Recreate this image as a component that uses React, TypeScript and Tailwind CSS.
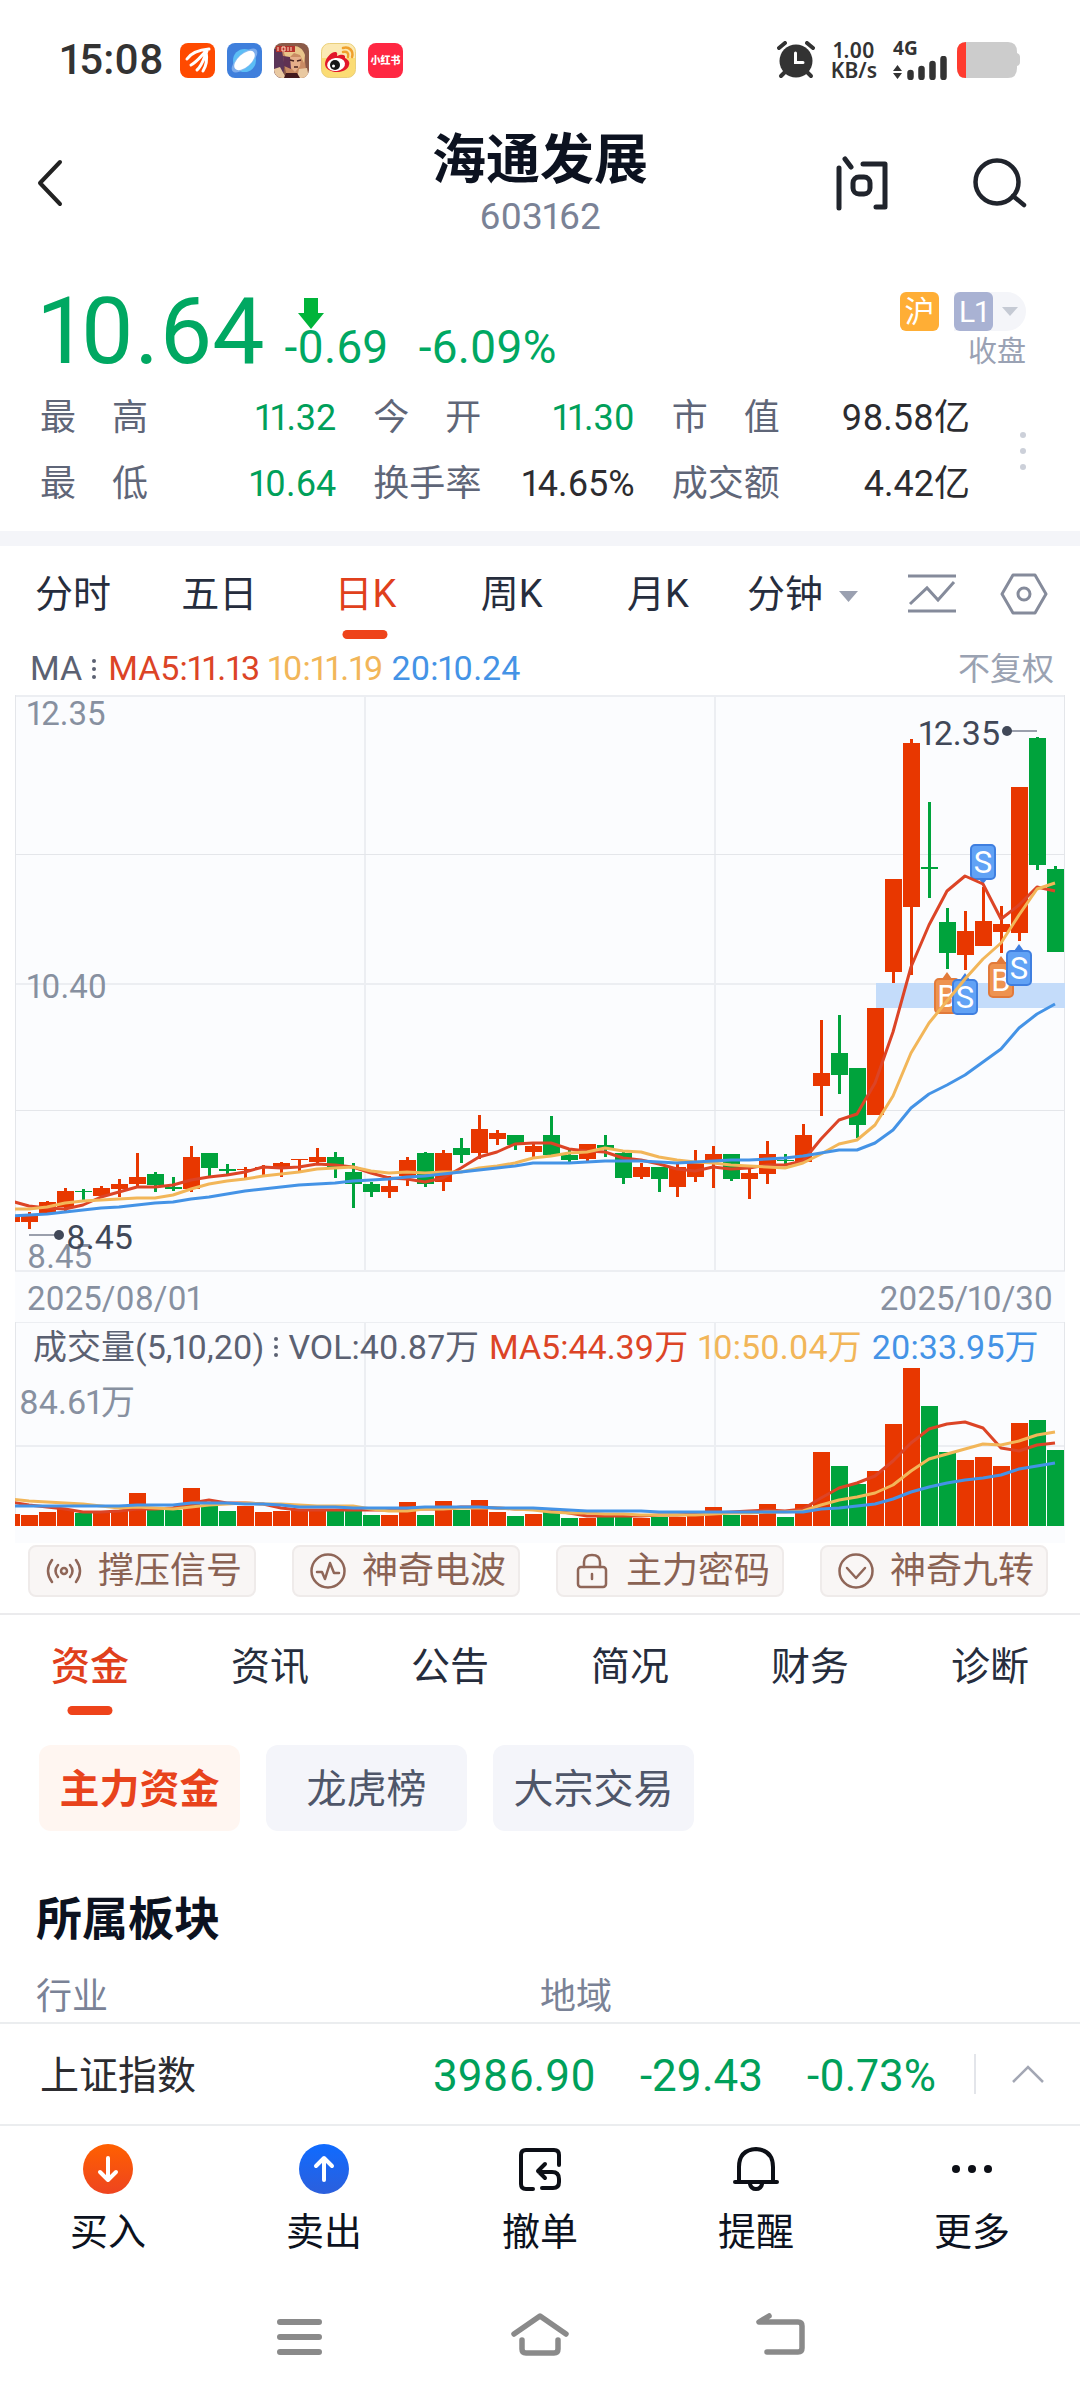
import { useState } from "react";

// [rising, body top, body bottom, high, low, volume height]
type Candle = [number, number, number, number, number, number];

const STEP = 18;
const FIRST_X = 11;

const candles: Candle[] = [
  [1, 1217, 1222, 1217, 1222, 12],
  [1, 1214, 1222, 1212, 1229, 11],
  [1, 1202, 1213, 1201, 1213, 14],
  [1, 1191, 1207, 1188, 1211, 17],
  [0, 1191, 1192, 1189, 1200, 13],
  [1, 1188, 1196, 1186, 1197, 14],
  [1, 1184, 1189, 1179, 1197, 16],
  [1, 1177, 1184, 1153, 1186, 33],
  [0, 1174, 1185, 1172, 1192, 17],
  [0, 1187, 1189, 1177, 1191, 16],
  [1, 1157, 1189, 1146, 1192, 38],
  [0, 1153, 1168, 1153, 1177, 21],
  [0, 1169, 1171, 1164, 1174, 15],
  [1, 1169, 1170, 1167, 1178, 20],
  [1, 1167, 1168, 1165, 1176, 14],
  [1, 1163, 1168, 1162, 1177, 15],
  [1, 1159, 1160, 1159, 1171, 17],
  [1, 1157, 1162, 1148, 1164, 16],
  [0, 1157, 1167, 1152, 1178, 17],
  [0, 1172, 1184, 1163, 1208, 16],
  [0, 1184, 1192, 1182, 1197, 11],
  [1, 1186, 1192, 1176, 1198, 11],
  [1, 1160, 1176, 1157, 1186, 24],
  [0, 1153, 1184, 1152, 1187, 11],
  [1, 1153, 1182, 1150, 1191, 25],
  [0, 1148, 1155, 1138, 1163, 16],
  [1, 1129, 1153, 1115, 1159, 26],
  [1, 1133, 1139, 1130, 1145, 14],
  [0, 1135, 1145, 1135, 1150, 10],
  [1, 1146, 1152, 1143, 1158, 12],
  [0, 1135, 1155, 1116, 1155, 14],
  [0, 1155, 1160, 1150, 1162, 8],
  [1, 1144, 1159, 1144, 1161, 8],
  [0, 1145, 1148, 1135, 1157, 9],
  [0, 1153, 1178, 1152, 1184, 9],
  [1, 1167, 1177, 1163, 1179, 8],
  [0, 1167, 1179, 1167, 1192, 9],
  [1, 1167, 1187, 1162, 1197, 9],
  [1, 1163, 1177, 1150, 1182, 10],
  [1, 1154, 1160, 1146, 1188, 19],
  [0, 1154, 1179, 1154, 1181, 11],
  [1, 1173, 1179, 1168, 1199, 11],
  [1, 1154, 1174, 1141, 1184, 22],
  [0, 1160, 1161, 1154, 1164, 9],
  [1, 1135, 1162, 1124, 1163, 22],
  [1, 1073, 1086, 1020, 1116, 74],
  [0, 1053, 1075, 1015, 1094, 60],
  [0, 1068, 1125, 1068, 1138, 42],
  [1, 1008, 1115, 1008, 1115, 55],
  [1, 879, 972, 879, 983, 102],
  [1, 743, 907, 739, 975, 158],
  [0, 867, 869, 802, 898, 120],
  [0, 922, 953, 908, 969, 74],
  [1, 931, 955, 911, 970, 66],
  [1, 921, 946, 887, 946, 69],
  [1, 924, 932, 906, 953, 60],
  [1, 787, 933, 787, 941, 103],
  [0, 738, 865, 737, 870, 106],
  [0, 869, 952, 866, 952, 76],
];

const priceMa = {
  ma5: [
    1201, 1206, 1208, 1209, 1205, 1197, 1192, 1187, 1187, 1185, 1180, 1177, 1175, 1172, 1167, 1168, 1167, 1164, 1165,
    1167, 1173, 1178, 1179, 1182, 1178, 1168, 1157, 1152, 1144, 1143, 1143, 1149, 1151, 1152, 1158, 1160, 1164, 1169,
    1171, 1167, 1169, 1168, 1165, 1165, 1161, 1139, 1120, 1114, 1083, 1032, 967, 925, 891, 876, 884, 919, 905, 887, 891,
  ],
  ma10: [
    1209, 1209, 1207, 1203, 1201, 1200, 1199, 1198, 1198, 1195, 1189, 1184, 1181, 1179, 1176, 1174, 1172, 1169, 1168,
    1167, 1171, 1173, 1172, 1173, 1172, 1172, 1168, 1166, 1163, 1158, 1156, 1153, 1152, 1148, 1151, 1152, 1157, 1160,
    1162, 1163, 1165, 1166, 1167, 1168, 1163, 1154, 1144, 1140, 1125, 1096, 1053, 1023, 1001, 979, 959, 943, 915, 889,
    883,
  ],
  ma20: [
    1216, 1215, 1214, 1212, 1210, 1208, 1207, 1205, 1203, 1202, 1199, 1197, 1194, 1191, 1189, 1187, 1185, 1184, 1183,
    1181, 1180, 1179, 1177, 1176, 1174, 1172, 1170, 1168, 1166, 1163, 1163, 1163, 1162, 1161, 1161, 1161, 1162, 1163,
    1162, 1161, 1160, 1160, 1159, 1158, 1156, 1153, 1150, 1150, 1143, 1130, 1108, 1094, 1085, 1075, 1062, 1049, 1028,
    1014, 1004,
  ],
};

const volumeMa = {
  ma5: [
    1502, 1505, 1507, 1509, 1512, 1512, 1511, 1509, 1509, 1508, 1503, 1500, 1503, 1503, 1504, 1508, 1510, 1510, 1510,
    1510, 1510, 1510, 1509, 1509, 1509, 1507, 1507, 1508, 1509, 1509, 1510, 1513, 1516, 1516, 1516, 1516, 1515, 1515,
    1514, 1513, 1512, 1511, 1510, 1511, 1509, 1498, 1488, 1483, 1476, 1461, 1443, 1429, 1424, 1422, 1428, 1448, 1451,
    1445, 1443,
  ],
  ma10: [
    1499, 1501, 1502, 1503, 1504, 1506, 1508, 1507, 1508, 1509, 1507, 1505, 1504, 1503, 1504, 1504, 1505, 1506, 1506,
    1506, 1509, 1511, 1511, 1509, 1509, 1508, 1508, 1508, 1509, 1510, 1512, 1513, 1513, 1514, 1514, 1515, 1515, 1515,
    1515, 1514, 1513, 1513, 1512, 1512, 1511, 1505, 1500, 1497, 1493, 1485, 1471, 1459, 1454, 1449, 1444, 1445, 1441,
    1435, 1432,
  ],
  ma20: [
    1506, 1506, 1506, 1506, 1506, 1506, 1506, 1505, 1505, 1505, 1503, 1503, 1503, 1504, 1504, 1505, 1507, 1507, 1507,
    1508, 1508, 1508, 1508, 1507, 1507, 1507, 1507, 1508, 1508, 1508, 1509, 1510, 1511, 1511, 1511, 1511, 1512, 1512,
    1512, 1512, 1512, 1512, 1512, 1512, 1512, 1509, 1508, 1506, 1504, 1499, 1492, 1487, 1483, 1480, 1478, 1475, 1469,
    1466, 1463,
  ],
};

const markers = [
  { kind: "S", x: 983, y: 844, tip: "down" },
  { kind: "B", x: 947, y: 978, tip: "up" },
  { kind: "S", x: 965, y: 979, tip: "up" },
  { kind: "B", x: 1001, y: 962, tip: "up" },
  { kind: "S", x: 1019, y: 950, tip: "up" },
];

const stats = [
  { label: ["最", "高"], value: "11.32", green: true },
  { label: ["今", "开"], value: "11.30", green: true },
  { label: ["市", "值"], value: "98.58亿", green: false },
  { label: ["最", "低"], value: "10.64", green: true },
  { label: ["换", "手", "率"], value: "14.65%", green: false },
  { label: ["成", "交", "额"], value: "4.42亿", green: false },
];

const periods = ["分时", "五日", "日K", "周K", "月K"];
const sections = ["资金", "资讯", "公告", "简况", "财务", "诊断"];
const fundTabs = ["主力资金", "龙虎榜", "大宗交易"];

const xAt = (i: number) => FIRST_X + i * STEP;
const colorOf = (up: number) => (up ? "#e83700" : "#00a33c");
const toPoints = (ys: number[]) => ys.map((y, i) => `${xAt(i)},${y}`).join(" ");

function MaLines({ data, clip }: { data: typeof priceMa; clip: string }) {
  return (
    <g fill="none" strokeWidth="3" strokeLinejoin="round" clipPath={`url(#${clip})`}>
      <polyline points={toPoints(data.ma5)} stroke="#dc4426" />
      <polyline points={toPoints(data.ma10)} stroke="#f2b659" />
      <polyline points={toPoints(data.ma20)} stroke="#4493e6" />
    </g>
  );
}

function Marker({ kind, x, y, tip }: { kind: string; x: number; y: number; tip: string }) {
  const buy = kind === "B";
  const fill = buy ? "#ee9350" : "#61a2f5";
  const stroke = buy ? "#e27a3a" : "#3f7fe0";
  const nose = tip === "up" ? `M${x - 5} ${y + 1}L${x} ${y - 6}L${x + 5} ${y + 1}Z` : `M${x - 5} ${y + 34}L${x} ${y + 40}L${x + 5} ${y + 34}Z`;
  return (
    <g>
      <path d={nose} fill={stroke} />
      <rect x={x - 12} y={y + 1} width="24" height="34" rx="4" fill={fill} stroke={stroke} strokeWidth="2" />
      <text x={x} y={y + 29} textAnchor="middle" fontSize="31" fill="#fff">
        {kind}
      </text>
    </g>
  );
}

function PriceChart() {
  return (
    <svg viewBox="15 695 1050 577" className="block h-auto w-full overflow-visible" role="img" aria-label="日K">
      <defs>
        <clipPath id="price">
          <rect x="15" y="695" width="1050" height="577" />
        </clipPath>
      </defs>
      <rect x="15" y="695" width="1050" height="577" fill="#fbfcfe" />
      <g stroke="#eceef2" strokeWidth="2">
        <path d="M15 696H1065M15 984H1065M15 1271H1065M365 695V1271M715 695V1271" />
        <path d="M15 854.5H1065M15 1110.5H1065M15.5 695V1271M1064.5 695V1271" strokeWidth="1" stroke="#e4e6ea" />
      </g>
      <rect x="876" y="983" width="189" height="25" fill="#c4dcfa" />
      <text x="27" y="725" fontSize="33" fill="#8790a0">12.35</text>
      <text x="27" y="998" fontSize="33" fill="#8790a0">10.40</text>
      <text x="27" y="1268" fontSize="33" fill="#8790a0">8.45</text>
      <g clipPath="url(#price)">
        {candles.map(([up, top, bottom, high, low], i) => (
          <g key={i} fill={colorOf(up)}>
            <rect x={xAt(i) - 8} y={top} width="17" height={bottom - top} />
            <rect x={xAt(i) - 1} y={high} width="3" height={low - high} />
          </g>
        ))}
      </g>
      {markers.map((marker) => (
        <Marker key={marker.x} {...marker} />
      ))}
      <MaLines data={priceMa} clip="price" />
      <path d="M1007 731H1037M29 1235H59" stroke="#9a9fac" strokeWidth="2" />
      <circle cx="1007" cy="731" r="5" fill="#414858" />
      <circle cx="59" cy="1235" r="5" fill="#414858" />
      <text x="1000" y="745" fontSize="34" fill="#414858" textAnchor="end">12.35</text>
      <text x="66" y="1249" fontSize="34" fill="#414858">8.45</text>
    </svg>
  );
}

function VolumeChart() {
  return (
    <svg viewBox="15 1322 1050 221" className="block h-auto w-full" role="img" aria-label="成交量">
      <defs>
        <clipPath id="volume">
          <rect x="15" y="1322" width="1050" height="221" />
        </clipPath>
      </defs>
      <rect x="15" y="1322" width="1050" height="221" fill="#fbfcfe" />
      <path d="M15 1322H1065M15 1446H1065M365 1322V1526M715 1322V1526" stroke="#eceef2" strokeWidth="2" />
      <path d="M15.5 1322V1526M1064.5 1322V1526" stroke="#e4e6ea" />
      {candles.map(([up, , , , , vol], i) => (
        <rect key={i} x={xAt(i) - 8} y={1526 - vol} width="17" height={vol} fill={colorOf(up)} />
      ))}
      <MaLines data={volumeMa} clip="volume" />
    </svg>
  );
}

function Dots({ className }: { className?: string }) {
  return (
    <span className={`flex flex-col gap-1 ${className ?? ""}`}>
      <i className="h-1 w-1 rounded-full bg-[#5b6172]" />
      <i className="h-1 w-1 rounded-full bg-[#5b6172]" />
      <i className="h-1 w-1 rounded-full bg-[#5b6172]" />
    </span>
  );
}

function StatusBar() {
  return (
    <div className="flex h-[120px] items-center justify-between pr-[60px] pl-[60px] text-[#333]">
      <div className="flex items-center gap-3">
        <span className="mr-1 text-[42px] leading-none font-medium">15:08</span>
        <svg viewBox="0 0 35 35" className="size-[35px]">
          <rect width="35" height="35" rx="8" fill="#ff4a00" />
          <path
            d="M7 16C11 10 17 7 29 6M11 22C17 19 21 13 27 7M17 27C22 23 24 15 27 8M23 28C27 22 27 14 26 8"
            fill="none"
            stroke="#fff"
            strokeWidth="3"
            strokeLinecap="round"
          />
        </svg>
        <svg viewBox="0 0 35 35" className="size-[35px]">
          <rect width="35" height="35" rx="8" fill="#3f7fdc" />
          <circle cx="17.5" cy="17.5" r="11.5" fill="#5cbef5" />
          <ellipse cx="17.5" cy="17.5" rx="16" ry="7" transform="rotate(-42 17.5 17.5)" fill="#8fb9f0" opacity=".8" />
          <ellipse cx="17.5" cy="17.5" rx="12.5" ry="6.5" transform="rotate(-42 17.5 17.5)" fill="#fff" />
        </svg>
        <svg viewBox="0 0 35 35" className="size-[35px]">
          <defs>
            <clipPath id="game">
              <rect width="35" height="35" rx="8" />
            </clipPath>
          </defs>
          <g clipPath="url(#game)">
            <rect width="35" height="35" fill="#8a5a48" />
            <path d="M0 6H12L9 35H0Z" fill="#5b3558" />
            <path d="M8 8L20 3L30 10L33 35H26L12 30Z" fill="#c98b63" />
            <path d="M10 10C14 1 27 0 31 12L30 20L26 12L20 10L13 17Z" fill="#e8c58a" />
            <path d="M16 14L27 14L26 23L21 29L15 23Z" fill="#e5ae8a" />
            <path d="M9 13L16 14L17 26L10 23Z" fill="#5f3152" />
            <path d="M16 17L20 18M23 18L27 17M20 24H24" stroke="#4a2420" strokeWidth="1.5" />
            <path d="M2 3H21V9H2Z" fill="#b8322c" />
            <path d="M4 8V4M8 4H11V8H8ZM14 4V8M17 4V8" stroke="#ffe2c4" fill="none" />
            <path d="M0 26L6 24L12 35H0ZM25 26L33 25L35 35H23Z" fill="#e9c9a2" />
            <path d="M12 30L23 30L26 35H10Z" fill="#42191c" />
          </g>
        </svg>
        <svg viewBox="0 0 35 35" className="size-[35px]">
          <rect x=".5" y=".5" width="34" height="34" rx="8" fill="#fbdc74" stroke="#e9cf7c" />
          <path d="M1 10Q1 1 9 1H26Q34 1 34 10V15H1Z" fill="#fbe9b4" />
          <path d="M4 21C4 15 11 8 15 9C17 10 16 12 16 13C20 11 25 11 24 15C28 17 29 20 28 22C26 32 4 31 4 21Z" fill="#e2162a" />
          <ellipse cx="15" cy="21.5" rx="9" ry="6.5" fill="#fff" transform="rotate(-8 15 21)" />
          <circle cx="14" cy="22" r="5" fill="#161616" />
          <circle cx="12.5" cy="23" r="1.5" fill="#fff" />
          <path d="M22 5C28 3 33 8 31 14M22 9C26 8 28 10 27 14" fill="none" stroke="#f0a02c" strokeWidth="2.5" strokeLinecap="round" />
        </svg>
        <svg viewBox="0 0 35 35" className="size-[35px]">
          <rect width="35" height="35" rx="8" fill="#ff2742" />
          <text x="17.5" y="21" fontSize="10" fontWeight="900" textAnchor="middle" fill="#fff">
            小红书
          </text>
        </svg>
      </div>
      <div className="flex items-center">
        <svg viewBox="0 0 38 38" className="mr-4 size-[38px]">
          <circle cx="19" cy="20" r="16.5" fill="#333" />
          <path d="M2 7L8 2M36 7L30 2" stroke="#333" strokeWidth="4" strokeLinecap="round" />
          <path d="M8 31L4 35M30 31L34 35" stroke="#333" strokeWidth="4" strokeLinecap="round" />
          <path d="M18.5 12V21.5H26" fill="none" stroke="#fff" strokeWidth="3" strokeLinecap="round" />
        </svg>
        <div className="mr-4 text-center font-['Noto_Sans'] text-[21px] leading-5 font-semibold">
          <div>1.00</div>
          <div>KB/s</div>
        </div>
        <div className="mr-[10px] flex flex-col">
          <span className="font-['Noto_Sans'] text-[19px] leading-4 font-bold">4G</span>
          <svg viewBox="0 0 54 24" className="h-6 w-[54px]">
            <path d="M0 15H9L4.5 9ZM0 17H9L4.5 23Z" fill="#333" />
            <path d="M17.5 17V21M28.5 13V21M39.5 8V21M50.5 3V21" stroke="#333" strokeWidth="6.5" strokeLinecap="round" />
          </svg>
        </div>
        <svg viewBox="0 0 63 36" className="h-9 w-[63px]">
          <path d="M9 0H51Q60 0 60 10V11Q63 12 63 15V20Q63 23 60 24V26Q60 36 51 36H9Q0 36 0 26V10Q0 0 9 0Z" fill="#ccc" />
          <path d="M9 0V36Q0 36 0 26V10Q0 0 9 0Z" fill="#ff3b2f" />
        </svg>
      </div>
    </div>
  );
}

function Header() {
  return (
    <header className="grid h-[126px] grid-cols-[1fr_auto_1fr] items-center px-9">
      <button aria-label="返回" className="justify-self-start">
        <svg viewBox="0 0 28 50" className="h-[50px] w-7" fill="none" stroke="#222" strokeWidth="4" strokeLinecap="round" strokeLinejoin="round">
          <path d="M24 4L4 25L24 46" />
        </svg>
      </button>
      <div className="pt-1 text-center">
        <h1 className="text-[54px] leading-[64px] font-bold text-[#0c1220]">海通发展</h1>
        <p className="text-[37px] leading-[48px] text-[#7a8296]">603162</p>
      </div>
      <div className="flex items-center gap-[84px] justify-self-end pr-[17px]">
        <button aria-label="问">
          <svg viewBox="0 0 54 56" className="h-14 w-[54px]" fill="none" stroke="#20242c" strokeWidth="5" strokeLinecap="round" strokeLinejoin="round">
            <path d="M4 13V53M10 4L16 12M28 9H50V52H41" />
            <rect x="18" y="22" width="17" height="17" rx="6" />
          </svg>
        </button>
        <button aria-label="搜索">
          <svg viewBox="0 0 54 52" className="h-[52px] w-[54px]" fill="none" stroke="#20242c" strokeWidth="4.5" strokeLinecap="round">
            <circle cx="24" cy="25" r="21.5" />
            <path d="M40 39L51 48" />
          </svg>
        </button>
      </div>
    </header>
  );
}

function Quote() {
  return (
    <section className="pb-[14px]">
      <div className="flex h-[139px] items-end justify-between pr-[54px] pl-10">
        <div className="flex items-baseline text-[#00a862]">
          <span className="text-[93px] leading-[106px]">10.64</span>
          <span className="relative ml-5 text-[46px]">
            -0.69
            <svg viewBox="0 0 26 33" className="absolute -top-4 left-[14px] h-[33px] w-[26px]">
              <path d="M6 1H20V16H26L13 32L0 16H6Z" fill="#00b43a" />
            </svg>
          </span>
          <span className="ml-[30px] text-[46px]">-6.09%</span>
        </div>
        <div className="flex flex-col items-end pb-3">
          <div className="flex items-center gap-[15px]">
            <span className="flex size-[39px] items-center justify-center rounded-md bg-[#ffae35] text-[30px] leading-none text-white">沪</span>
            <button className="flex items-center rounded-r-full bg-[#f4f5f9] pr-2">
              <span className="flex size-[39px] items-center justify-center rounded-md bg-[#a9b2d3] text-[30px] leading-none text-white">L1</span>
              <svg viewBox="0 0 16 9" className="ml-[9px] h-[9px] w-4">
                <path d="M0 0H16L8 9Z" fill="#c5cad4" />
              </svg>
            </button>
          </div>
          <span className="text-[29px] leading-[42px] text-[#9aa2b4]">收盘</span>
        </div>
      </div>
      <div className="flex items-center pr-[54px] pl-10">
        <dl className="grid flex-1 grid-cols-[296fr_261fr_298fr] gap-x-[37px] text-[36px] leading-[66px]">
          {stats.map((stat) => (
            <div key={stat.value} className="flex justify-between">
              <dt className="flex w-[108px] justify-between text-[#5f6678]">
                {stat.label.map((char) => (
                  <span key={char}>{char}</span>
                ))}
              </dt>
              <dd className={stat.green ? "text-[#00a05a]" : "text-[#2c2c30]"}>{stat.value}</dd>
            </div>
          ))}
        </dl>
        <button aria-label="更多行情" className="ml-[50px] flex flex-col gap-[10px]">
          <i className="size-[6px] rounded-full bg-[#ccd0d9]" />
          <i className="size-[6px] rounded-full bg-[#ccd0d9]" />
          <i className="size-[6px] rounded-full bg-[#ccd0d9]" />
        </button>
      </div>
    </section>
  );
}

function PeriodTabs() {
  const [active, setActive] = useState("日K");
  return (
    <nav className="flex h-24 items-center">
      <div className="grid h-full flex-1 grid-cols-5">
        {periods.map((name) => (
          <button
            key={name}
            onClick={() => setActive(name)}
            className={`relative text-[38px] ${name === active ? "text-[#e0401c]" : "text-[#262d3d]"}`}
          >
            {name}
            {name === active && <i className="absolute bottom-[3px] left-1/2 h-[9px] w-[45px] -translate-x-1/2 rounded-full bg-[#ee431a]" />}
          </button>
        ))}
      </div>
      <button className="ml-4 flex items-center gap-4 text-[38px] text-[#262d3d]">
        分钟
        <svg viewBox="0 0 19 11" className="mt-1 h-[11px] w-[19px]">
          <path d="M0 0H19L9.5 11Z" fill="#9aa0b0" />
        </svg>
      </button>
      <button aria-label="指标" className="ml-[49px]">
        <svg viewBox="0 0 50 40" className="h-10 w-[50px]" fill="none" stroke="#858b9b" strokeWidth="3">
          <path d="M1 2H49M1 37H49M3 30L20 14L31 26L47 8" />
        </svg>
      </button>
      <button aria-label="设置" className="mr-8 ml-[43px]">
        <svg viewBox="0 0 48 42" className="h-[42px] w-12" fill="none" stroke="#858b9b" strokeWidth="3" strokeLinejoin="round">
          <path d="M13 2H35L46 21L35 40H13L2 21Z" />
          <circle cx="24" cy="21" r="6" />
        </svg>
      </button>
    </nav>
  );
}

function SignalIcon({ name }: { name: string }) {
  return (
    <svg viewBox="0 0 36 36" className="size-9" fill="none" stroke="#8f6658" strokeWidth="2.5" strokeLinecap="round" strokeLinejoin="round">
      {name === "撑压信号" && (
        <>
          <circle cx="18" cy="18" r="3" />
          <path d="M12 12Q7 18 12 24M24 12Q29 18 24 24M6 7Q-2 18 6 29M30 7Q38 18 30 29" />
        </>
      )}
      {name === "神奇电波" && (
        <>
          <circle cx="18" cy="18" r="16.5" />
          <path d="M7 19H12L15 26L20 10L24 20H29" />
        </>
      )}
      {name === "主力密码" && (
        <>
          <rect x="4" y="14" width="28" height="20" rx="3" />
          <path d="M10 14V9Q10 2 18 2Q26 2 26 9V14M18 21V26" />
        </>
      )}
      {name === "神奇九转" && (
        <>
          <circle cx="18" cy="18" r="16.5" />
          <path d="M9 15L18 25L27 15" />
        </>
      )}
    </svg>
  );
}

function ChartPanel() {
  return (
    <section>
      <div className="flex h-[53px] items-center justify-between pr-[26px] pl-[30px] text-[34px]">
        <div className="flex items-center text-[#5b6172]">
          <span>MA</span>
          <Dots className="mr-3 ml-[10px]" />
          <span className="text-[#dc4426]">MA5:11.13</span>
          <span className="ml-2 text-[#f2b659]">10:11.19</span>
          <span className="ml-2 text-[#4493e6]">20:10.24</span>
        </div>
        <button className="text-[32px] text-[#9aa2b2]">不复权</button>
      </div>
      <div className="mx-[15px] bg-[#fbfcfe]">
        <PriceChart />
        <div className="flex h-[50px] items-center justify-between px-3 pt-1 text-[33px] text-[#8790a0]">
          <time>2025/08/01</time>
          <time>2025/10/30</time>
        </div>
        <div className="relative">
          <VolumeChart />
          <div className="absolute inset-x-0 top-0 flex items-center pl-[18px] text-[34px] leading-[50px] whitespace-nowrap text-[#5b6172]">
            <span>成交量(5,10,20)</span>
            <Dots className="mx-[10px]" />
            <span>VOL:40.87万</span>
            <span className="ml-[10px] text-[#dc4426]">MA5:44.39万</span>
            <span className="ml-[10px] text-[#f2b659]">10:50.04万</span>
            <span className="ml-[10px] text-[#4493e6]">20:33.95万</span>
          </div>
          <span className="absolute top-14 left-1 text-[34px] leading-[48px] text-[#8790a0]">84.61万</span>
        </div>
      </div>
      <div className="grid grid-cols-4 gap-9 border-b-2 border-[#ebebed] px-7 pt-[2px] pr-8 pb-4">
        {["撑压信号", "神奇电波", "主力密码", "神奇九转"].map((name) => (
          <button
            key={name}
            className="flex h-[52px] items-center justify-center gap-4 rounded-lg border-2 border-[#efebea] bg-[#f9f6f5] pl-1 text-[36px] whitespace-nowrap text-[#8a6253]"
          >
            <SignalIcon name={name} />
            {name}
          </button>
        ))}
      </div>
    </section>
  );
}

function FundSection() {
  const [section, setSection] = useState("资金");
  const [fund, setFund] = useState("主力资金");
  return (
    <section>
      <nav className="grid h-[104px] grid-cols-6">
        {sections.map((name) => (
          <button
            key={name}
            onClick={() => setSection(name)}
            className={`relative text-[39px] ${name === section ? "font-medium text-[#e0401c]" : "text-[#262d3d]"}`}
          >
            {name}
            {name === section && <i className="absolute bottom-1 left-1/2 h-[9px] w-[45px] -translate-x-1/2 rounded-full bg-[#ee431a]" />}
          </button>
        ))}
      </nav>
      <div className="mt-[26px] flex gap-[26px] px-[39px]">
        {fundTabs.map((name) => (
          <button
            key={name}
            onClick={() => setFund(name)}
            className={`h-[86px] w-[201px] rounded-xl pt-1 text-[40px] whitespace-nowrap ${
              name === fund ? "bg-[#fff6f1] font-bold text-[#e8431c]" : "bg-[#f4f5fa] text-[#4f5669]"
            }`}
          >
            {name}
          </button>
        ))}
      </div>
      <h2 className="mt-14 px-9 text-[46px] leading-[64px] font-bold text-[#0c1220]">所属板块</h2>
      <div className="mt-5 grid h-[51px] grid-cols-2 px-9 text-[36px] leading-[52px] text-[#7a8296]">
        <span>行业</span>
        <span>地域</span>
      </div>
    </section>
  );
}

function IndexBar() {
  return (
    <div className="flex h-[104px] items-center border-y-2 border-[#ebedef] pr-9 pl-10 text-[44px] text-[#00a05a]">
      <div className="flex flex-1 items-center pt-1">
        <span className="flex-1 text-[39px] text-[#2c2c30]">上证指数</span>
        <span>3986.90</span>
        <span className="ml-11">-29.43</span>
        <span className="ml-11 w-[137px]">-0.73%</span>
      </div>
      <i className="ml-[30px] h-10 w-[2px] bg-[#e3e5ea]" />
      <button aria-label="展开" className="ml-9">
        <svg viewBox="0 0 32 18" className="h-[18px] w-8" fill="none" stroke="#a3a7b4" strokeWidth="2.5">
          <path d="M1 17L16 2L31 17" />
        </svg>
      </button>
    </div>
  );
}

function ActionIcon({ name }: { name: string }) {
  return (
    <svg viewBox="0 0 50 50" className="size-[50px]" fill="none" strokeWidth="4" strokeLinecap="round" strokeLinejoin="round">
      <defs>
        <linearGradient id="buy" x2="0" y2="1">
          <stop stopColor="#ff6000" />
          <stop offset="1" stopColor="#ee4420" />
        </linearGradient>
        <linearGradient id="sell" x2="0" y2="1">
          <stop stopColor="#0f6bff" />
          <stop offset="1" stopColor="#2c5fdc" />
        </linearGradient>
      </defs>
      {name === "买入" && (
        <>
          <circle cx="25" cy="25" r="25" fill="url(#buy)" />
          <path d="M25 14V35M17 28L25 36L33 28" stroke="#fff" />
        </>
      )}
      {name === "卖出" && (
        <>
          <circle cx="25" cy="25" r="25" fill="url(#sell)" />
          <path d="M25 36V15M17 22L25 14L33 22" stroke="#fff" />
        </>
      )}
      {name === "撤单" && (
        <path d="M44 21V11Q44 6 39 6H11Q6 6 6 11V40Q6 45 11 45H18M30 20L23 27L30 34M24 28H37Q44 28 44 35V38Q44 44 38 44H27" stroke="#0c0f16" />
      )}
      {name === "提醒" && (
        <>
          <path d="M8 38V23Q8 6 25 5Q42 6 42 23V38" stroke="#0c0f16" />
          <path d="M4 38H46M19 40Q20 45 25 45Q30 45 31 40" stroke="#0c0f16" />
        </>
      )}
      {name === "更多" && (
        <g fill="#0c0f16">
          <circle cx="9" cy="25" r="4" />
          <circle cx="25" cy="25" r="4" />
          <circle cx="41" cy="25" r="4" />
        </g>
      )}
    </svg>
  );
}

function BottomBars() {
  return (
    <footer>
      <nav className="grid grid-cols-5 pt-[18px]">
        {["买入", "卖出", "撤单", "提醒", "更多"].map((name) => (
          <button key={name} className="flex flex-col items-center gap-[10px] text-[38px] leading-[56px] text-[#0c1220]">
            <ActionIcon name={name} />
            {name}
          </button>
        ))}
      </nav>
      <div className="flex h-[140px] items-center justify-center gap-[186px] pt-2">
        <button aria-label="最近任务">
          <svg viewBox="0 0 50 44" className="h-11 w-[50px]" stroke="#8a8a8a" strokeWidth="6" strokeLinecap="round">
            <path d="M5 10H44M5 25H44M5 40H44" />
          </svg>
        </button>
        <button aria-label="主屏幕">
          <svg viewBox="0 0 58 44" className="h-11 w-[58px]" fill="none" stroke="#8a8a8a" strokeWidth="5.5" strokeLinecap="round" strokeLinejoin="round">
            <path d="M3 22L29 4L55 22M11 28V37Q11 41 15 41H43Q47 41 47 37V28" />
          </svg>
        </button>
        <button aria-label="返回上一页">
          <svg viewBox="0 0 50 44" className="h-11 w-[50px]" fill="none" stroke="#8a8a8a" strokeWidth="5.5" strokeLinecap="round" strokeLinejoin="round">
            <path d="M14 4L4 10H43Q47 10 47 14V36Q47 40 43 40H12" />
          </svg>
        </button>
      </div>
    </footer>
  );
}

export default function App() {
  return (
    <div className="min-h-screen w-full bg-white font-[Roboto,'Noto_Sans_CJK_SC',sans-serif] proportional-nums">
      <StatusBar />
      <Header />
      <Quote />
      <div className="h-[15px] bg-[#f4f5f9]" />
      <PeriodTabs />
      <ChartPanel />
      <FundSection />
      <IndexBar />
      <BottomBars />
    </div>
  );
}
